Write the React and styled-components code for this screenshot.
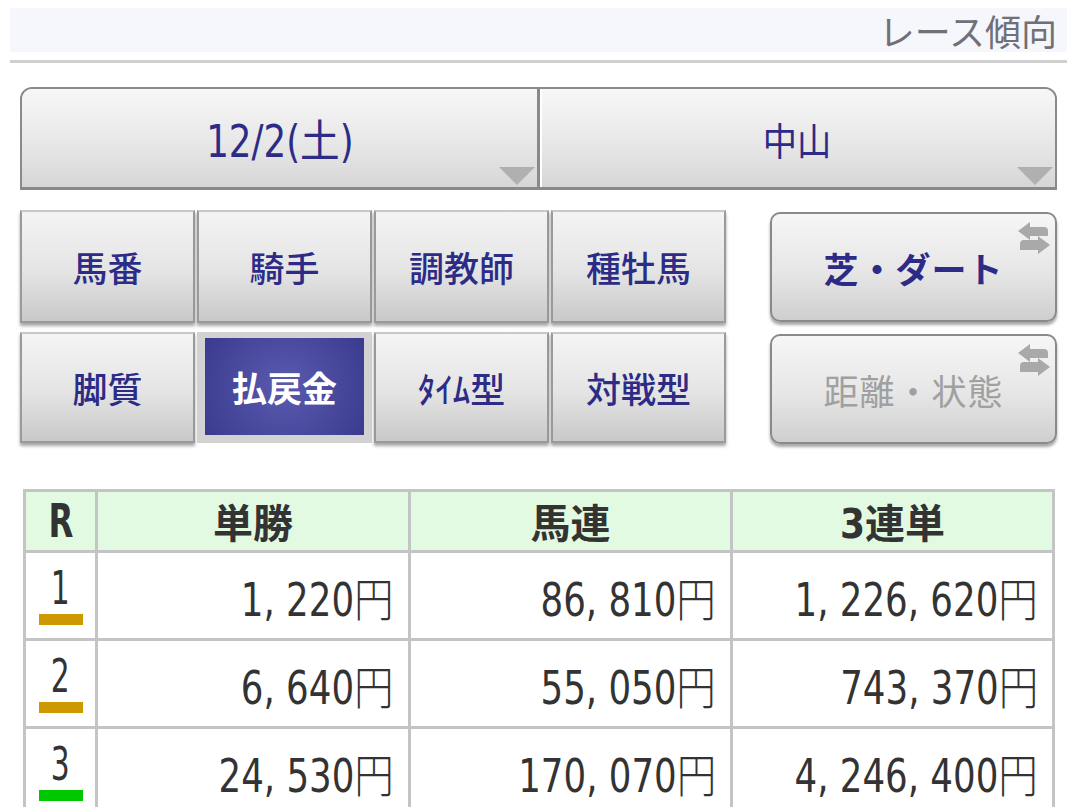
import React from "react";
import styled, { createGlobalStyle } from "styled-components";

const GlobalStyle = createGlobalStyle`
  body {
    margin: 0;
    background: #fff;
    font-family: "DejaVu Sans Condensed", "Noto Sans CJK JP", sans-serif;
  }
`;

const Page = styled.div`
  width: 1079px;
  padding-top: 8px;
`;

const TitleBar = styled.div`
  margin: 0 12px 0 10px;
  height: 44px;
  background: #f5f7fc;
  display: flex;
  justify-content: flex-end;
  align-items: center;
  padding-right: 10px;
  color: #707078;
  font-family: "Noto Sans CJK JP", sans-serif;
  font-size: 36px;
`;

const Rule = styled.div`
  margin: 8px 12px 0 10px;
  height: 3px;
  background: #d0d0d0;
`;

const SelectRow = styled.div`
  margin: 24px 22px 0 20px;
  height: 98px;
  display: flex;
  border: 2px solid #8a8a8a;
  border-bottom-width: 3px;
  border-radius: 12px 12px 0 0;
  overflow: hidden;
`;

const SelectBox = styled.div`
  flex: 1;
  position: relative;
  display: flex;
  align-items: center;
  justify-content: center;
  background: linear-gradient(#f7f7f7, #e6e6e6 60%, #d6d6d6);
  color: #2c2c86;
  font-size: ${(p) => p.$size || 36}px;
  & + & {
    border-left: 3px solid #8a8a8a;
    box-shadow: inset 2px 0 0 #fff;
  }
`;

const Squeeze = styled.span`
  display: inline-block;
  transform: scaleX(${(p) => p.$x || 0.85});
  transform-origin: ${(p) => p.$origin || "center"};
`;

const Arrow = styled.span`
  position: absolute;
  right: 2px;
  bottom: 2px;
  width: 0;
  height: 0;
  border-left: 18px solid transparent;
  border-right: 18px solid transparent;
  border-top: 18px solid #b0b0b0;
`;

const Controls = styled.div`
  margin: 20px 22px 0 20px;
  display: flex;
  gap: 44px;
`;

const Grid = styled.div`
  width: 706px;
  display: grid;
  grid-template-columns: repeat(4, 175px);
  grid-template-rows: 113px 111px;
  column-gap: 2px;
  row-gap: 9px;
`;

const TabButton = styled.div`
  display: flex;
  align-items: center;
  justify-content: center;
  background: linear-gradient(#f4f4f4, #e4e4e4 55%, #c9c9c9);
  border: 2px solid #9a9a9a;
  border-top-color: #c8c8c8;
  box-shadow: 0 3px 3px rgba(0, 0, 0, 0.35);
  color: #2c2c86;
  font-family: "Noto Sans CJK JP", sans-serif;
  font-weight: 500;
  font-size: 35px;
`;

const ActiveTab = styled.div`
  display: flex;
  align-items: center;
  justify-content: center;
  background: #d2d2d2;
  padding: 6px 8px 8px 8px;
  & > span {
    width: 100%;
    height: 100%;
    display: flex;
    align-items: center;
    justify-content: center;
    background: radial-gradient(circle at 50% 50%, #5a5ab0, #3a3a8e);
    color: #fff;
    font-family: "Noto Sans CJK JP", sans-serif;
    font-weight: 700;
    font-size: 35px;
  }
`;

const SideColumn = styled.div`
  flex: 1;
  display: flex;
  flex-direction: column;
  gap: 12px;
  padding-top: 2px;
`;

const ToggleButton = styled.div`
  position: relative;
  height: 106px;
  display: flex;
  align-items: center;
  justify-content: center;
  border: 2px solid #8a8a8a;
  border-radius: 10px;
  background: linear-gradient(#f6f6f6, #e6e6e6 55%, #cfcfcf);
  box-shadow: 0 3px 3px rgba(0, 0, 0, 0.35);
  color: ${(p) => (p.$dim ? "#a0a0a0" : "#2c2c86")};
  font-family: "Noto Sans CJK JP", sans-serif;
  font-weight: ${(p) => (p.$dim ? 400 : 700)};
  font-size: 35px;
  letter-spacing: 1px;
`;

const SwapIcon = styled.svg`
  position: absolute;
  top: 8px;
  right: 4px;
`;

const Table = styled.table`
  margin: 45px 0 0 23px;
  width: 1029px;
  border-collapse: collapse;
  table-layout: fixed;
  color: #333;
`;

const Th = styled.th`
  height: 58px;
  background: #e2fae2;
  border: 3px solid #c4c4c4;
  font-family: "DejaVu Sans Condensed", "Noto Sans CJK JP", sans-serif;
  font-weight: 700;
  font-size: ${(p) => p.$size || 40}px;
  padding: 0;
  color: #333;
`;

const Td = styled.td`
  height: 85px;
  border: 3px solid #c4c4c4;
  text-align: right;
  padding: 0 14px 0 0;
  font-size: 46px;
  font-weight: 300;
  white-space: nowrap;
`;

const RCell = styled.td`
  height: 85px;
  border: 3px solid #c4c4c4;
  padding: 0;
  text-align: center;
  vertical-align: top;
`;

const RaceNo = styled.div`
  font-size: 46px;
  line-height: 46px;
  margin-top: 12px;
  font-weight: 300;
`;

const RaceBar = styled.div`
  width: 44px;
  height: 11px;
  margin: 3px auto 0;
  background: ${(p) => p.$color};
`;

const swap = (
  <SwapIcon width="34" height="32" viewBox="0 0 34 32">
    <path d="M1 9 L13 0 V5 H27 Q31 5 31 9 V14 H13 V18 Z" fill="#a9a9a9" />
    <path d="M33 23 L21 14 V18 H7 Q3 18 3 22 V28 H21 V32 Z" fill="#a9a9a9" />
  </SwapIcon>
);

const tabs = ["馬番", "騎手", "調教師", "種牡馬", "脚質", "払戻金", "ﾀｲﾑ型", "対戦型"];

const rows = [
  { r: 1, color: "#cc9a00", win: "1, 220円", quinella: "86, 810円", trifecta: "1, 226, 620円" },
  { r: 2, color: "#cc9a00", win: "6, 640円", quinella: "55, 050円", trifecta: "743, 370円" },
  { r: 3, color: "#00c800", win: "24, 530円", quinella: "170, 070円", trifecta: "4, 246, 400円" },
];

export default function App() {
  return (
    <Page>
      <GlobalStyle />
      <TitleBar>レース傾向</TitleBar>
      <Rule />
      <SelectRow>
        <SelectBox $size={44}>
          <Squeeze $x={0.9}>12/2(土)</Squeeze>
          <Arrow />
        </SelectBox>
        <SelectBox $size={38}>
          <Squeeze $x={0.9}>中山</Squeeze>
          <Arrow />
        </SelectBox>
      </SelectRow>
      <Controls>
        <Grid>
          {tabs.map((t) =>
            t === "払戻金" ? (
              <ActiveTab key={t}>
                <span>{t}</span>
              </ActiveTab>
            ) : (
              <TabButton key={t}>{t}</TabButton>
            )
          )}
        </Grid>
        <SideColumn>
          <ToggleButton>
            芝・ダート
            {swap}
          </ToggleButton>
          <ToggleButton $dim>
            距離・状態
            {swap}
          </ToggleButton>
        </SideColumn>
      </Controls>
      <Table>
        <colgroup>
          <col style={{ width: 72 }} />
          <col style={{ width: 313 }} />
          <col style={{ width: 322 }} />
          <col style={{ width: 322 }} />
        </colgroup>
        <thead>
          <tr>
            <Th $size={46}>
              <Squeeze $x={0.78}>R</Squeeze>
            </Th>
            <Th>単勝</Th>
            <Th>馬連</Th>
            <Th>3連単</Th>
          </tr>
        </thead>
        <tbody>
          {rows.map((row) => (
            <tr key={row.r}>
              <RCell>
                <RaceNo>
                  <Squeeze $x={0.72}>{row.r}</Squeeze>
                </RaceNo>
                <RaceBar $color={row.color} />
              </RCell>
              <Td>
                <Squeeze $x={0.86} $origin="right">{row.win}</Squeeze>
              </Td>
              <Td>
                <Squeeze $x={0.86} $origin="right">{row.quinella}</Squeeze>
              </Td>
              <Td>
                <Squeeze $x={0.86} $origin="right">{row.trifecta}</Squeeze>
              </Td>
            </tr>
          ))}
        </tbody>
      </Table>
    </Page>
  );
}
